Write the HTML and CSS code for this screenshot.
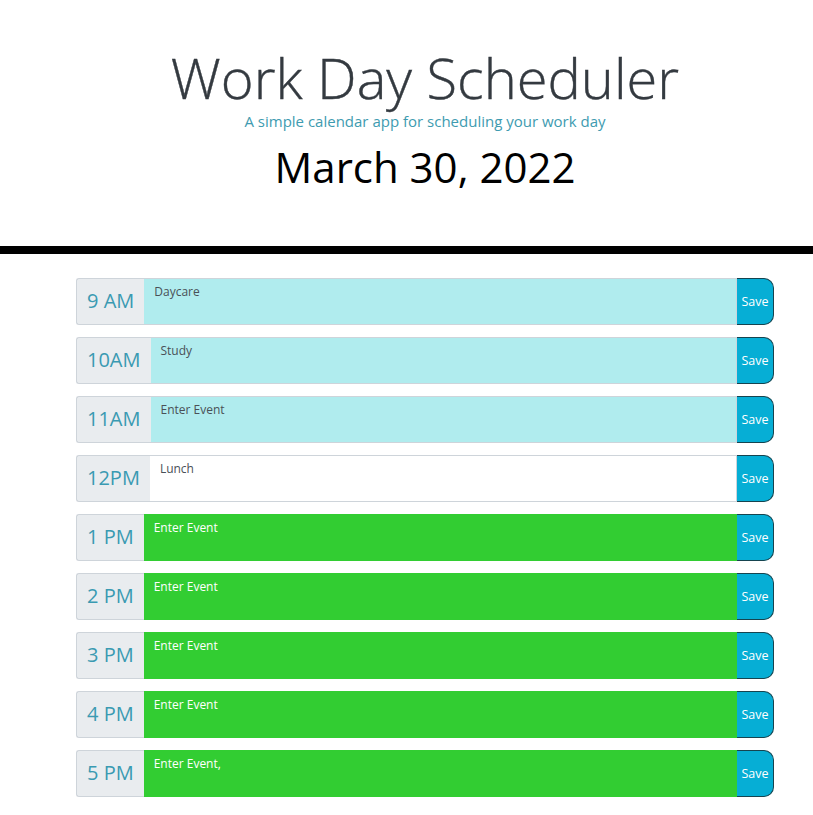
FILE: index.html
```html
<!DOCTYPE html>
<html lang="en">
<head>
<meta charset="utf-8">
<title>Work Day Scheduler</title>
<link rel="stylesheet" href="styles.css">
</head>
<body>
<div class="page">
  <header class="jumbotron">
    <h1 class="title">Work Day Scheduler</h1>
    <p class="lead">A simple calendar app for scheduling your work day</p>
    <p class="current-day">March 30, 2022</p>
  </header>
  <main class="schedule">
    <div class="row">
      <div class="hour">9 AM</div>
      <div class="event past">Daycare</div>
      <button class="save">Save</button>
    </div>
    <div class="row">
      <div class="hour">10AM</div>
      <div class="event past">Study</div>
      <button class="save">Save</button>
    </div>
    <div class="row">
      <div class="hour">11AM</div>
      <div class="event past">Enter Event</div>
      <button class="save">Save</button>
    </div>
    <div class="row">
      <div class="hour">12PM</div>
      <div class="event present">Lunch</div>
      <button class="save">Save</button>
    </div>
    <div class="row">
      <div class="hour">1 PM</div>
      <div class="event future">Enter Event</div>
      <button class="save">Save</button>
    </div>
    <div class="row">
      <div class="hour">2 PM</div>
      <div class="event future">Enter Event</div>
      <button class="save">Save</button>
    </div>
    <div class="row">
      <div class="hour">3 PM</div>
      <div class="event future">Enter Event</div>
      <button class="save">Save</button>
    </div>
    <div class="row">
      <div class="hour">4 PM</div>
      <div class="event future">Enter Event</div>
      <button class="save">Save</button>
    </div>
    <div class="row">
      <div class="hour">5 PM</div>
      <div class="event future">Enter Event,</div>
      <button class="save">Save</button>
    </div>
  </main>
</div>
</body>
</html>
```
FILE: styles.css
```css
html, body {
  margin: 0;
  padding: 0;
  background: #fff;
  overflow: hidden;
}
body {
  font-family: "Open Sans", "Noto Sans", sans-serif;
}
.page {
  width: 850px;
}
.jumbotron {
  text-align: center;
  padding-top: 44px;
  padding-bottom: 54px;
  border-bottom: 8px solid #000;
}
.title {
  margin: 0;
  font-size: 56px;
  font-weight: 300;
  line-height: 1.2;
  color: #343a40;
  -webkit-text-stroke: 0.4px #343a40;
}
.lead {
  margin: 0;
  font-size: 15px;
  font-weight: 400;
  color: #3e9bb0;
  line-height: 20px;
}
.current-day {
  margin: 11px 0 0;
  font-size: 42px;
  line-height: 50px;
  color: #000;
}
.schedule {
  width: 698px;
  margin: 24px auto 0;
  display: flex;
  flex-direction: column;
  gap: 12px;
}
.row {
  display: flex;
  height: 47px;
}
.hour {
  display: flex;
  align-items: center;
  padding: 0 10px 3px;
  background: #e9ecef;
  border: 1px solid #ced4da;
  border-right: none;
  border-radius: 3px 0 0 3px;
  font-size: 20px;
  color: #3a9ab2;
}
.event {
  flex: 1;
  padding: 5px 10px;
  font-size: 12px;
  line-height: 16px;
  color: #495057;
  border: 1px solid #ced4da;
  border-left: none;
}
.past {
  background: #b0ecee;
}
.present {
  background: #fff;
}
.future {
  background: #32cd32;
  color: #fff;
  border-color: #32cd32;
}
.save {
  width: 37px;
  padding: 0;
  border: 1px solid #16444f;
  border-left: none;
  border-radius: 0 10px 10px 0;
  background: #06aed5;
  color: #fff;
  font-family: "Open Sans", "Noto Sans", sans-serif;
  font-size: 12.5px;
}
```
